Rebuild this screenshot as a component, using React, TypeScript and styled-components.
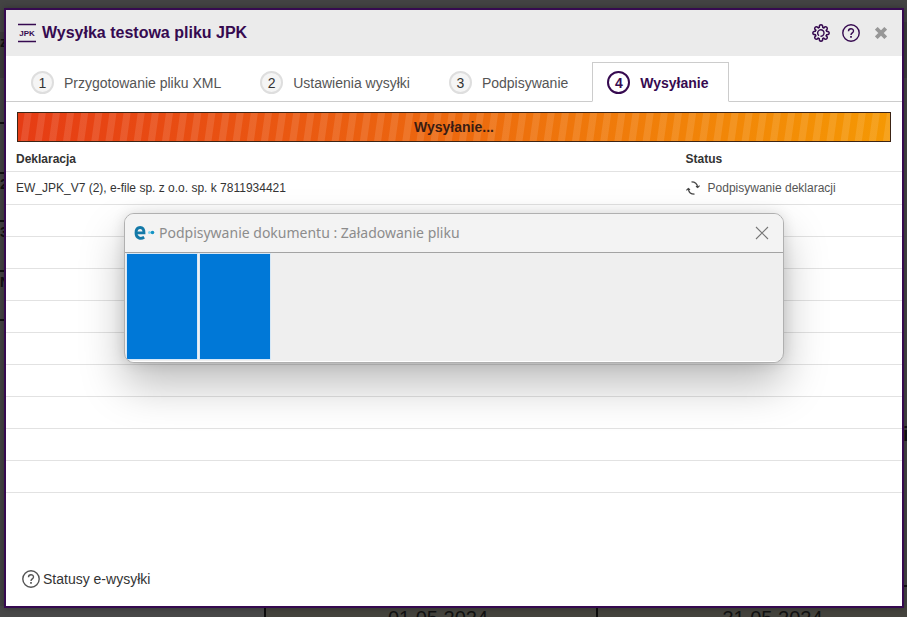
import React from "react";
import styled, { createGlobalStyle, css } from "styled-components";

const purple = "#360a50";

const GlobalStyle = createGlobalStyle`
  *, *::before, *::after { box-sizing: border-box; }
  body {
    margin: 0;
    background: #434343;
    color: #333;
    font-family: "Liberation Sans", Arial, sans-serif;
    font-size: 14px;
  }
  button { border: 0; padding: 0; background: none; font: inherit; color: inherit; cursor: pointer; }
  svg { display: block; }
`;

const Page = styled.div`
  position: relative;
  display: flex;
  min-height: 100vh;
  padding: 8px 3px 9px 4px;
  overflow: hidden;
`;

const Backdrop = styled.div`
  position: absolute;
  inset: 0;
  display: flex;
  flex-direction: column;
  justify-content: space-between;
  overflow: hidden;
  color: #111;
`;

const Edges = styled.div`
  display: flex;
  justify-content: space-between;
`;

const Fragments = styled.div`
  display: flex;
  flex-direction: column;
  width: 12px;
  padding-top: 32px;
  font-size: 14px;
  font-weight: bold;
  &:last-child { width: 4px; padding-top: 22px; font-size: 20px; }
`;

const Fragment = styled.span<{ $height: number; $line?: boolean; $shade?: string }>`
  height: ${(p) => p.$height}px;
  line-height: 20px;
  background: ${(p) => p.$shade ?? "transparent"};
  border-bottom: ${(p) => (p.$line ? "2px solid #111" : "0")};
`;

const DateRow = styled.div`
  display: grid;
  grid-template-columns: 266px 332px 1fr;
  height: 11px;
  background: #44433d;
`;

const DateCell = styled.div`
  padding: 0 0 0 14px;
  border-right: 2px solid #0c0c0c;
  font-size: 20px;
  line-height: 24px;
  text-align: center;
  &:first-child { background: #484848; }
  &:last-child { border-right: 0; padding-left: 40px; }
`;

const Dialog = styled.section`
  position: relative;
  display: flex;
  flex: 1;
  flex-direction: column;
  border: 2px solid ${purple};
  background: #fff;
  box-shadow: 0 0 6px rgba(0, 0, 0, 0.3);
`;

const Header = styled.header`
  display: flex;
  align-items: center;
  gap: 6px;
  height: 46px;
  padding: 0 11px 0 12px;
  background: #ebebeb;
  color: ${purple};
`;

const Title = styled.h1`
  flex: 1;
  margin: 0;
  font-size: 16px;
  line-height: 20px;
`;

const Tools = styled.div`
  display: flex;
  gap: 10px;
`;

const ToolButton = styled.button`
  display: grid;
  place-items: center;
  width: 20px;
  height: 20px;
`;

const Tabs = styled.nav`
  display: flex;
  align-items: flex-end;
  gap: 4px;
  height: 46px;
  padding-left: 10px;
  border-bottom: 1px solid #ccc;
`;

const Tab = styled.button<{ $active?: boolean }>`
  display: flex;
  align-items: center;
  gap: 10px;
  height: 40px;
  margin-bottom: -1px;
  padding: 1px 19px 0 14px;
  border: 1px solid transparent;
  color: #555;
  ${(p) =>
    p.$active &&
    css`
      border-color: #ccc;
      border-bottom-color: #fff;
      background: #fff;
      color: ${purple};
      font-weight: bold;
    `}
`;

const StepNumber = styled.span<{ $active?: boolean }>`
  display: grid;
  place-items: center;
  width: 23px;
  height: 23px;
  border: 2px solid ${(p) => (p.$active ? purple : "#dedede")};
  border-radius: 50%;
  background: ${(p) => (p.$active ? "#fff" : "#f5f5f5")};
  color: ${(p) => (p.$active ? purple : "#333")};
`;

const Progress = styled.div`
  margin: 10px 11px 0;
  border: 1px solid #3c2415;
  background:
    repeating-linear-gradient(98deg, transparent 0 6px, rgba(255, 255, 255, 0.11) 7px 13px, transparent 14px),
    linear-gradient(90deg, #e63c14, #eb6010 40%, #f59803);
  color: #3a1c12;
  font-weight: bold;
  line-height: 28px;
  text-align: center;
`;

const Table = styled.table`
  width: 100%;
  border-collapse: collapse;
  table-layout: fixed;
  font-size: 12px;
`;

const HeadCell = styled.th<{ $width?: string }>`
  width: ${(p) => p.$width ?? "auto"};
  height: 29px;
  padding: 6px 4px 0 10px;
  border-bottom: 1px solid #e2e2e2;
  line-height: 16px;
  text-align: left;
  & + & { padding-left: 4px; }
`;

const Cell = styled.td<{ $filled?: boolean }>`
  height: ${(p) => (p.$filled ? 33 : 32)}px;
  padding: 0 4px 0 10px;
  border-bottom: 1px solid #e2e2e2;
  & + & { padding-left: 4px; }
`;

const Status = styled.span`
  display: flex;
  align-items: center;
  gap: 8px;
  color: #555;
`;

const Footer = styled.footer`
  margin-top: auto;
  padding: 0 16px 15px;
`;

const HelpLink = styled.a`
  display: inline-flex;
  align-items: center;
  gap: 3px;
  color: #333;
  text-decoration: none;
`;

const Popup = styled.section`
  position: absolute;
  top: 203px;
  left: 118px;
  right: 118px;
  overflow: hidden;
  border: 1px solid #b0b0b0;
  border-radius: 10px;
  background: #efefef;
  box-shadow: 0 22px 44px rgba(0, 0, 0, 0.26), 0 0 14px rgba(0, 0, 0, 0.12);
`;

const PopupBar = styled.header`
  display: flex;
  align-items: center;
  gap: 4px;
  height: 39px;
  padding: 0 11px 0 9px;
  border-bottom: 1px solid #a3a3a3;
  background: #f3f3f3;
`;

const PopupTitle = styled.h2`
  flex: 1;
  margin: 0;
  color: #8c8c8c;
  font: 400 14px/20px "Noto Sans", sans-serif;
`;

const Blocks = styled.div`
  display: flex;
  gap: 3px;
  height: 109px;
  padding: 1px 0 2px 2px;
  border-bottom: 1px solid #fff;
`;

const Block = styled.span`
  width: 70px;
  background: #0078d7;
  box-shadow: 0 0 0 1px #d6e8f7;
`;

const JpkIcon = () => (
  <svg width="18" height="20" viewBox="0 0 18 20" aria-hidden="true">
    <path d="M0 1.500h18M0 18.500h18" stroke={purple} strokeWidth="1.300" />
    <text x="9" y="13" textAnchor="middle" fontSize="8" fontWeight="bold" fill={purple} fontFamily="Liberation Sans">
      JPK
    </text>
  </svg>
);

const tooth = "M7.200 3.300C7.200 1.400 8 .8 9 .8s1.800.6 1.800 2.500";
const toothAngles = [0, 45, 90, 135, 180, 225, 270, 315];

const GearIcon = () => (
  <svg width="18" height="18" viewBox="0 0 18 18" fill="none" stroke={purple} strokeWidth="1.400" strokeLinecap="round">
    {toothAngles.map((angle) => (
      <g key={angle} transform={`rotate(${angle} 9 9)`}>
        <path d={tooth} />
        <path d="M10.800 3.300c.4.600 1 .6 1.500.3" />
      </g>
    ))}
    <path d="M6.600 11.300a3.200 3.200 0 1 1 2.400.9" />
  </svg>
);

const QuestionIcon = ({ color }: { color: string }) => (
  <svg width="18" height="18" viewBox="0 0 18 18" fill="none" stroke={color} strokeWidth="1.400">
    <circle cx="9" cy="9" r="8.200" />
    <path d="M6.500 7.200c0-3.400 5-3.200 5-.3 0 2-2.500 1.900-2.500 4" />
    <path d="M9 12v1.700" strokeWidth="1.700" />
  </svg>
);

const CloseIcon = () => (
  <svg width="12" height="12" viewBox="0 0 12 12" stroke="#979797" strokeWidth="3.800">
    <path d="M1.300 1.300l9.400 9.400M10.700 1.300l-9.400 9.400" />
  </svg>
);

const SpinnerIcon = () => (
  <svg width="14" height="14" viewBox="0 0 14 14" fill="none" stroke="#444" strokeWidth="1.200">
    <path d="M5.500 .8c3.600 0 5.700 2 6.200 5.400M13.600 4.600l-1.900 1.800-1.700-1.200" />
    <path d="M8.500 13.200c-3.600 0-5.700-2-6.200-5.400M.4 9.400l1.900-1.800 1.700 1.200" />
  </svg>
);

const AppIcon = () => (
  <svg width="21" height="16" viewBox="0 0 21 16" aria-hidden="true">
    <path
      d="M10.200 12.300C6.800 14.300 2 13.300 2 7.900 2 4.600 3.700 2.500 6.200 2.500c2.700 0 3.800 2 3.800 5.400H3"
      fill="none"
      stroke="#1379a8"
      strokeWidth="2.800"
    />
    <circle cx="15.500" cy="7.500" r="1.500" fill="#7fd6ee" />
    <circle cx="18.500" cy="7.500" r="1.800" fill="#1493c4" />
  </svg>
);

const steps = ["Przygotowanie pliku XML", "Ustawienia wysyłki", "Podpisywanie", "Wysyłanie"];
const emptyRows = Array.from({ length: 9 }, (_, i) => i);

export default function App() {
  return (
    <Page>
      <GlobalStyle />
      <Backdrop aria-hidden="true">
        <Edges>
          <Fragments>
            <Fragment $height={46} $shade="#3b3b3b">z</Fragment>
            <Fragment $height={46} $line />
            <Fragment $height={50} $line />
            <Fragment $height={48} $line>2</Fragment>
            <Fragment $height={50} $line>3</Fragment>
            <Fragment $height={49} $line>N</Fragment>
          </Fragments>
          <Fragments>
            <Fragment $height={56} $shade="#3b3b3b" />
            <Fragment $height={346} />
            <Fragment $height={163} $line>i</Fragment>
          </Fragments>
        </Edges>
        <DateRow>
          <DateCell />
          <DateCell>01.05.2024</DateCell>
          <DateCell>31.05.2024</DateCell>
        </DateRow>
      </Backdrop>
      <Dialog role="dialog" aria-labelledby="dialog-title">
        <Header>
          <JpkIcon />
          <Title id="dialog-title">Wysyłka testowa pliku JPK</Title>
          <Tools>
            <ToolButton aria-label="Ustawienia"><GearIcon /></ToolButton>
            <ToolButton aria-label="Pomoc"><QuestionIcon color={purple} /></ToolButton>
            <ToolButton aria-label="Zamknij"><CloseIcon /></ToolButton>
          </Tools>
        </Header>
        <Tabs>
          {steps.map((label, i) => (
            <Tab key={label} $active={i === 3} aria-current={i === 3 ? "step" : undefined}>
              <StepNumber $active={i === 3}>{i + 1}</StepNumber>
              {label}
            </Tab>
          ))}
        </Tabs>
        <Progress role="status">Wysyłanie...</Progress>
        <Table>
          <thead>
            <tr>
              <HeadCell $width="75.4%">Deklaracja</HeadCell>
              <HeadCell>Status</HeadCell>
            </tr>
          </thead>
          <tbody>
            <tr>
              <Cell $filled>EW_JPK_V7 (2), e-file sp. z o.o. sp. k 7811934421</Cell>
              <Cell $filled>
                <Status><SpinnerIcon />Podpisywanie deklaracji</Status>
              </Cell>
            </tr>
            {emptyRows.map((row) => (
              <tr key={row}><Cell /><Cell /></tr>
            ))}
          </tbody>
        </Table>
        <Footer>
          <HelpLink href="#statusy"><QuestionIcon color="#555" />Statusy e-wysyłki</HelpLink>
        </Footer>
        <Popup role="dialog" aria-labelledby="popup-title">
          <PopupBar>
            <AppIcon />
            <PopupTitle id="popup-title">Podpisywanie dokumentu : Załadowanie pliku</PopupTitle>
            <ToolButton aria-label="Zamknij okno">
              <svg width="14" height="14" viewBox="0 0 14 14" stroke="#777" strokeWidth="1.100">
                <path d="M1 1l12 12M13 1L1 13" />
              </svg>
            </ToolButton>
          </PopupBar>
          <Blocks role="progressbar" aria-label="Załadowanie pliku">
            <Block />
            <Block />
          </Blocks>
        </Popup>
      </Dialog>
    </Page>
  );
}
